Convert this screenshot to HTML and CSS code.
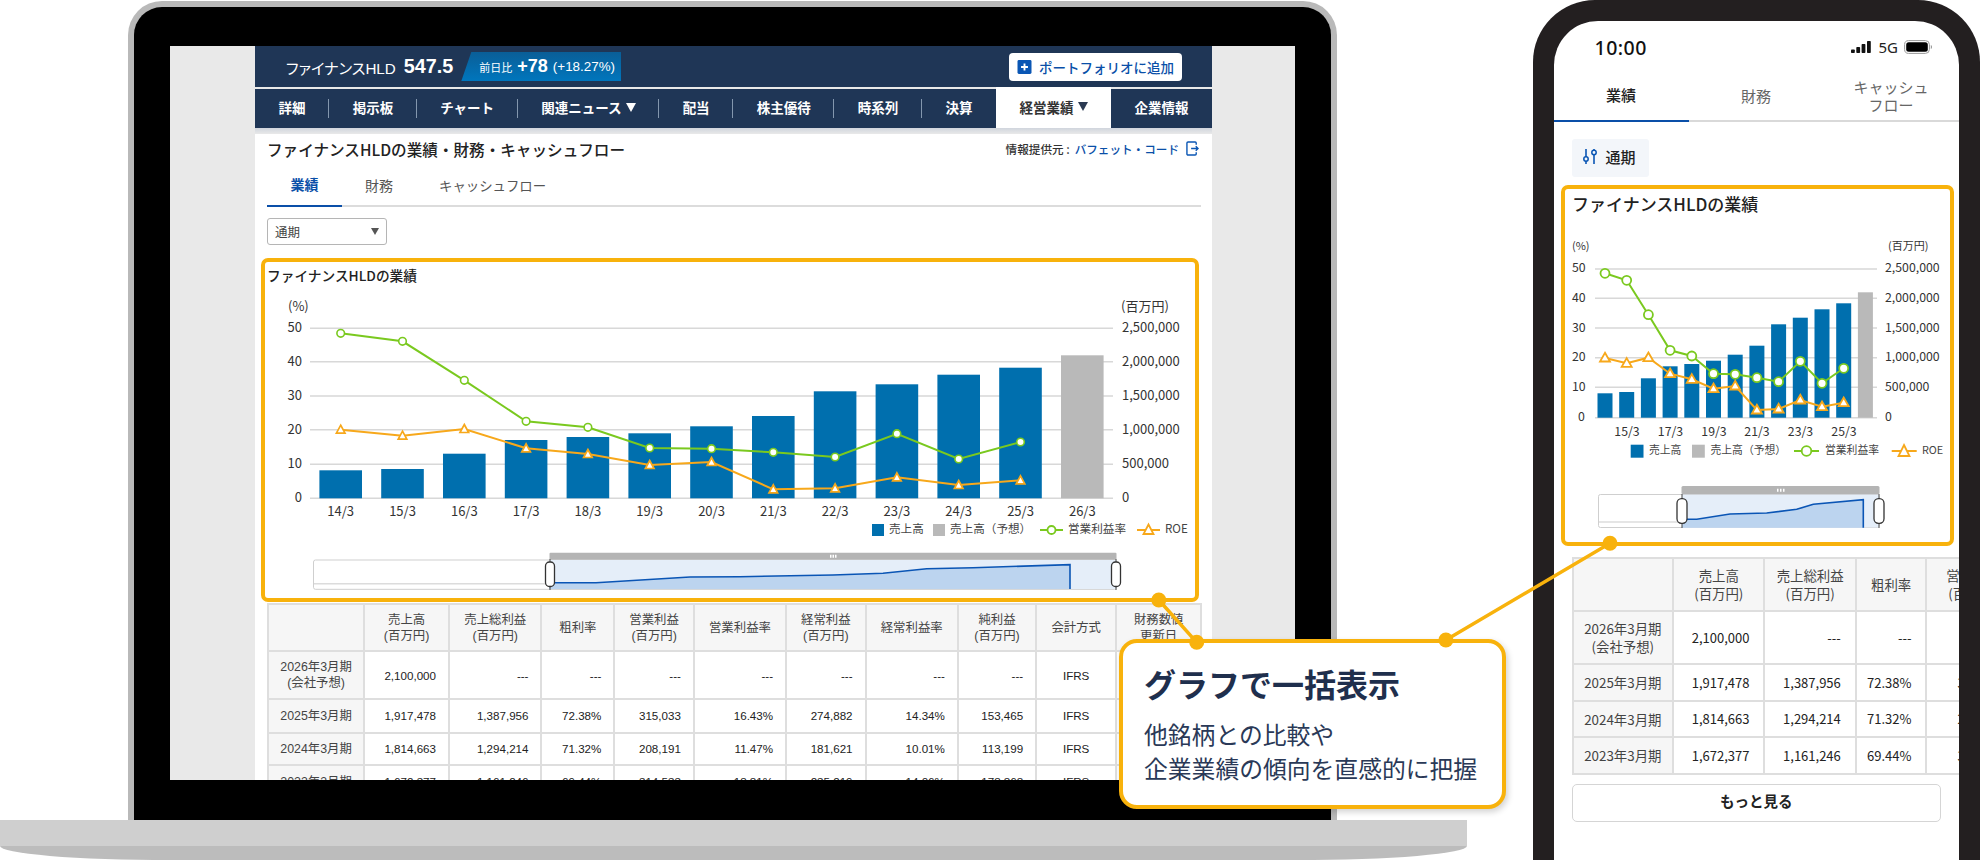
FILE: index.html
```html
<!DOCTYPE html>
<html lang="ja">
<head>
<meta charset="utf-8">
<title>ファイナンスHLDの業績</title>
<link rel="stylesheet" href="styles.css">
</head>
<body>
<div class="stage">

  <div class="laptop-base"></div>

  <div class="laptop">
    <div class="screen">
      <div class="app">
        <header class="stock">
          <span class="stock-name">ファイナンスHLD</span>
          <span class="stock-price">547.5</span>
          <span class="stock-badge"><span class="badge-label">前日比</span><b class="badge-diff">+78</b><span class="badge-pct">(+18.27%)</span></span>
          <button class="add-btn">
            <svg class="add-icon" viewBox="0 0 15 15"><rect width="15" height="15" rx="1.5" fill="#0a56b4"/><path d="M7.5 3.8v7.4M3.8 7.5h7.4" stroke="#fff" stroke-width="2"/></svg>
            ポートフォリオに追加
          </button>
        </header>
        <nav class="nav">
          <a class="nav-item sep">詳細</a>
          <a class="nav-item sep">掲示板</a>
          <a class="nav-item sep">チャート</a>
          <a class="nav-item sep">関連ニュース<i class="caret"></i></a>
          <a class="nav-item sep">配当</a>
          <a class="nav-item sep">株主優待</a>
          <a class="nav-item sep">時系列</a>
          <a class="nav-item">決算</a>
          <a class="nav-item active">経営業績<i class="caret"></i></a>
          <a class="nav-item">企業情報</a>
        </nav>
        <div class="band"></div>
        <main class="content">
          <div class="title-row">
            <h1 class="page-title">ファイナンスHLDの業績・財務・キャッシュフロー</h1>
            <div class="provider"><span>情報提供元 :</span><a class="provider-link">バフェット・コード</a>
              <svg class="ext-icon" viewBox="0 0 14 16"><path d="M11 4V2.2A1.2 1.2 0 0 0 9.800 1H2.200A1.200 1.200 0 0 0 1 2.200v11.600A1.200 1.200 0 0 0 2.200 15h7.600A1.200 1.200 0 0 0 11 13.800V12M5.500 8H13M10.500 5.500 13 8l-2.500 2.500" fill="none" stroke="#0a56b4" stroke-width="1.500"/></svg>
            </div>
          </div>
          <div class="tabs">
            <a class="tab tab-on">業績</a>
            <a class="tab">財務</a>
            <a class="tab tab-long">キャッシュフロー</a>
          </div>
          <div class="select"><span>通期</span><i class="select-caret"></i></div>

          <section class="hl hl-desk">
            <h2 class="hl-title">ファイナンスHLDの業績</h2>
            <svg class="chart chart-desk" viewBox="265 292 930 305">
              <defs>
                <marker id="dc" markerUnits="userSpaceOnUse" markerWidth="12" markerHeight="12" refX="6" refY="6"><circle cx="6" cy="6" r="3.800" fill="#fff" stroke="#7ac91f" stroke-width="1.600"/></marker>
                <marker id="dt" markerUnits="userSpaceOnUse" markerWidth="14" markerHeight="14" refX="7" refY="7"><path d="M7 2.500 11.300 10.500H2.700Z" fill="#fff" stroke="#f7a81b" stroke-width="1.700"/></marker>
              </defs>
              <g class="grid">
                <path d="M310 327.300H1113M310 360.700H1113M310 395H1113M310 428.700H1113M310 463.300H1113M310 497.300H1113"/>
              </g>
              <g class="bars">
                <rect x="319.400" y="469.300" width="42.600" height="28"/>
                <rect x="381.200" y="468" width="42.600" height="29.300"/>
                <rect x="443" y="452.700" width="42.600" height="44.600"/>
                <rect x="504.800" y="439" width="42.600" height="58.300"/>
                <rect x="566.600" y="436" width="42.600" height="61.300"/>
                <rect x="628.400" y="432.300" width="42.600" height="65"/>
                <rect x="690.200" y="425.300" width="42.600" height="72"/>
                <rect x="752" y="415" width="42.600" height="82.300"/>
                <rect x="813.800" y="390.300" width="42.600" height="107"/>
                <rect x="875.600" y="383.300" width="42.600" height="114"/>
                <rect x="937.400" y="373.700" width="42.600" height="123.600"/>
                <rect x="999.200" y="366.700" width="42.600" height="130.600"/>
                <rect class="bar-est" x="1061" y="354.300" width="42.600" height="143"/>
              </g>
              <polyline class="line-green" marker-start="url(#dc)" marker-mid="url(#dc)" marker-end="url(#dc)" points="340.700,332.300 402.500,340.300 464.300,379.300 526.100,420.300 587.900,426.300 649.700,447 711.500,447.700 773.300,451.300 835.100,456 896.900,432.700 958.700,458 1020.500,441"/>
              <polyline class="line-orange" marker-start="url(#dt)" marker-mid="url(#dt)" marker-end="url(#dt)" points="340.700,428.700 402.500,434.700 464.300,428 526.100,447.300 587.900,453 649.700,464 711.500,461 773.300,488.300 835.100,487.300 896.900,476.300 958.700,484 1020.500,479.300"/>
              <g class="ax">
                <text x="288" y="311">(%)</text>
                <text x="1121" y="311">(百万円)</text>
                <g class="end">
                  <text x="302" y="331.500">50</text><text x="302" y="365.500">40</text><text x="302" y="399.500">30</text><text x="302" y="433.500">20</text><text x="302" y="467.500">10</text><text x="302" y="501.500">0</text>
                </g>
                <text x="1122" y="331.500">2,500,000</text><text x="1122" y="365.500">2,000,000</text><text x="1122" y="399.500">1,500,000</text><text x="1122" y="433.500">1,000,000</text><text x="1122" y="467.500">500,000</text><text x="1122" y="501.500">0</text>
                <g class="mid">
                  <text x="340.700" y="515.500">14/3</text><text x="402.500" y="515.500">15/3</text><text x="464.300" y="515.500">16/3</text><text x="526.100" y="515.500">17/3</text><text x="587.900" y="515.500">18/3</text><text x="649.700" y="515.500">19/3</text><text x="711.500" y="515.500">20/3</text><text x="773.300" y="515.500">21/3</text><text x="835.100" y="515.500">22/3</text><text x="896.900" y="515.500">23/3</text><text x="958.700" y="515.500">24/3</text><text x="1020.500" y="515.500">25/3</text><text x="1082.300" y="515.500">26/3</text>
                </g>
              </g>
              <g class="legend">
                <rect class="bars-swatch" x="872" y="523" width="12" height="12"/><text x="889" y="533">売上高</text>
                <rect class="bar-est" x="933" y="523" width="12" height="12"/><text x="950" y="533">売上高（予想）</text>
                <path class="line-green" d="M1040 529H1063"/><circle class="mark-c" cx="1051.500" cy="529" r="4"/><text x="1068" y="533">営業利益率</text>
                <path class="line-orange" d="M1137 529H1160"/><path class="mark-t" d="M1148.500 523.500 1153.500 533H1143.500Z"/><text x="1165" y="533">ROE</text>
              </g>
              <g class="mini">
                <rect class="mini-track" x="313.500" y="559" width="803" height="29.300" rx="2"/>
                <path class="mini-base" d="M314 582.700H549"/>
                <rect class="mini-sel" x="549.500" y="559" width="567" height="29"/>
                <path class="mini-area" d="M549 588V581.700L596 581.700 690 576 740 575.700 833 574 883 572.300 926.700 567.700 973 566.700 1070 563.700V588Z"/>
                <path class="mini-line" d="M549 581.700 596 581.700 690 576 740 575.700 833 574 883 572.300 926.700 567.700 973 566.700 1070 563.700V588"/>
                <rect class="mini-bar" x="549.500" y="551.700" width="567" height="7" rx="1"/>
                <path class="mini-grip" d="M830 555.200h1.500M832.500 555.200h1.500M835 555.200h1.500"/>
                <path class="mini-stem" d="M550 558V589M1116 558V589"/>
                <rect class="mini-handle" x="545.500" y="561" width="9" height="24.500" rx="4"/>
                <rect class="mini-handle" x="1111.500" y="561" width="9" height="24.500" rx="4"/>
              </g>
            </svg>
          </section>

          <table class="fin fin-desk">
            <colgroup><col class="d1"><col class="d2"><col class="d3"><col class="d4"><col class="d5"><col class="d6"><col class="d7"><col class="d8"><col class="d9"><col class="d10"><col class="d11"></colgroup>
            <tr class="r-head"><th></th><th>売上高<br>(百万円)</th><th>売上総利益<br>(百万円)</th><th>粗利率</th><th>営業利益<br>(百万円)</th><th>営業利益率</th><th>経常利益<br>(百万円)</th><th>経常利益率</th><th>純利益<br>(百万円)</th><th>会計方式</th><th>財務数値<br>更新日</th></tr>
            <tr class="r-first"><th>2026年3月期<br>(会社予想)</th><td>2,100,000</td><td>---</td><td>---</td><td>---</td><td>---</td><td>---</td><td>---</td><td>---</td><td class="ctr">IFRS</td><td></td></tr>
            <tr class="r-2"><th>2025年3月期</th><td>1,917,478</td><td>1,387,956</td><td>72.38%</td><td>315,033</td><td>16.43%</td><td>274,882</td><td>14.34%</td><td>153,465</td><td class="ctr">IFRS</td><td></td></tr>
            <tr class="r-3"><th>2024年3月期</th><td>1,814,663</td><td>1,294,214</td><td>71.32%</td><td>208,191</td><td>11.47%</td><td>181,621</td><td>10.01%</td><td>113,199</td><td class="ctr">IFRS</td><td></td></tr>
            <tr class="r-3"><th>2023年3月期</th><td>1,672,377</td><td>1,161,246</td><td>69.44%</td><td>314,533</td><td>18.81%</td><td>235,219</td><td>14.06%</td><td>178,868</td><td class="ctr">IFRS</td><td></td></tr>
          </table>
        </main>
      </div>
    </div>
  </div>

  <div class="phone">
    <div class="phone-screen">
      <div class="status">
        <span class="time">10:00</span>
        <span class="status-right">
          <svg class="signal" viewBox="0 0 20 12"><rect x="0" y="8.500" width="3.800" height="3.500" rx=".8"/><rect x="5.300" y="6" width="3.800" height="6" rx=".8"/><rect x="10.600" y="3" width="3.800" height="9" rx=".8"/><rect x="16" y="0" width="3.800" height="12" rx=".8"/></svg>
          <span class="net">5G</span>
          <svg class="battery" viewBox="0 0 28 14"><rect x=".6" y=".6" width="24.800" height="12.800" rx="4" fill="none" stroke="#999" stroke-width="1"/><rect x="2.200" y="2.200" width="21.600" height="9.600" rx="2.500" fill="#000"/><path d="M26.800 5v4c.8-.3 1.200-1.100 1.200-2s-.4-1.700-1.200-2Z" fill="#999"/></svg>
        </span>
      </div>
      <div class="p-tabs">
        <a class="p-tab p-tab-on">業績</a>
        <a class="p-tab">財務</a>
        <a class="p-tab">キャッシュ<br>フロー</a>
      </div>
      <div class="chip">
        <svg class="chip-icon" viewBox="0 0 14 15"><path d="M3 0v8M3 12v3M11 0v1M11 6v9" fill="none" stroke="#0a56b4" stroke-width="1.600"/><circle cx="3" cy="10" r="2.200" fill="none" stroke="#0a56b4" stroke-width="1.500"/><circle cx="11" cy="3.500" r="2.200" fill="none" stroke="#0a56b4" stroke-width="1.500"/></svg>
        通期
      </div>

      <section class="hl hl-phone">
        <h2 class="hl-title-p">ファイナンスHLDの業績</h2>
        <svg class="chart chart-phone" viewBox="1565 220 385 321">
          <defs>
            <marker id="pc" markerUnits="userSpaceOnUse" markerWidth="14" markerHeight="14" refX="7" refY="7"><circle cx="7" cy="7" r="4.500" fill="#fff" stroke="#7ac91f" stroke-width="1.800"/></marker>
            <marker id="pt" markerUnits="userSpaceOnUse" markerWidth="16" markerHeight="16" refX="8" refY="8"><path d="M8 2.800 13 11.500H3Z" fill="#fff" stroke="#f7a81b" stroke-width="1.800"/></marker>
          </defs>
          <g class="grid">
            <path d="M1595 268H1877M1595 297.300H1877M1595 327H1877M1595 356.700H1877M1595 386.300H1877M1595 416.700H1877"/>
          </g>
          <g class="bars">
            <rect x="1597.500" y="392.300" width="15" height="24.400"/>
            <rect x="1619.200" y="391" width="15" height="25.700"/>
            <rect x="1640.900" y="377.300" width="15" height="39.400"/>
            <rect x="1662.600" y="365.300" width="15" height="51.400"/>
            <rect x="1684.300" y="363" width="15" height="53.700"/>
            <rect x="1706" y="359.700" width="15" height="57"/>
            <rect x="1727.700" y="353.700" width="15" height="63"/>
            <rect x="1749.400" y="344.700" width="15" height="72"/>
            <rect x="1771.100" y="323.300" width="15" height="93.400"/>
            <rect x="1792.800" y="316.700" width="15" height="100"/>
            <rect x="1814.500" y="308.300" width="15" height="108.400"/>
            <rect x="1836.200" y="302.300" width="15" height="114.400"/>
            <rect class="bar-est" x="1857.900" y="291.300" width="15" height="125.400"/>
          </g>
          <polyline class="line-green" marker-start="url(#pc)" marker-mid="url(#pc)" marker-end="url(#pc)" points="1605,272.300 1626.700,279.300 1648.400,313.700 1670.100,349.300 1691.800,355 1713.500,372.700 1735.200,373.300 1756.900,376.700 1778.600,380.700 1800.300,360.300 1822,382.300 1843.700,367.300"/>
          <polyline class="line-orange" marker-start="url(#pt)" marker-mid="url(#pt)" marker-end="url(#pt)" points="1605,357 1626.700,362.300 1648.400,356.700 1670.100,372.700 1691.800,378.300 1713.500,387.700 1735.200,385 1756.900,409 1778.600,408 1800.300,399 1822,405.700 1843.700,401.700"/>
          <g class="ax ax-p">
            <text class="unit" x="1572" y="250">(%)</text>
            <text class="unit" x="1888" y="250">(百万円)</text>
            <text x="1572" y="272.300">50</text><text x="1572" y="301.800">40</text><text x="1572" y="331.500">30</text><text x="1572" y="361">20</text><text x="1572" y="390.800">10</text><text x="1578" y="421">0</text>
            <text x="1885" y="272.300">2,500,000</text><text x="1885" y="301.800">2,000,000</text><text x="1885" y="331.500">1,500,000</text><text x="1885" y="361">1,000,000</text><text x="1885" y="390.800">500,000</text><text x="1885" y="421">0</text>
            <g class="mid">
              <text x="1627" y="435.500">15/3</text><text x="1670.500" y="435.500">17/3</text><text x="1714" y="435.500">19/3</text><text x="1757" y="435.500">21/3</text><text x="1800.500" y="435.500">23/3</text><text x="1844" y="435.500">25/3</text>
            </g>
          </g>
          <g class="legend legend-p">
            <rect class="bars-swatch" x="1630.700" y="443.700" width="12.800" height="13"/><text x="1649" y="454">売上高</text>
            <rect class="bar-est" x="1692" y="443.700" width="12.800" height="13"/><text x="1710.500" y="454">売上高（予想）</text>
            <path class="line-green" d="M1794 450H1819"/><circle class="mark-c" cx="1806.500" cy="450" r="4.800"/><text x="1825" y="454">営業利益率</text>
            <path class="line-orange" d="M1891.700 450H1916.700"/><path class="mark-t" d="M1904 444 1909.500 455H1898.500Z"/><text x="1922" y="454">ROE</text>
          </g>
          <g class="mini">
            <rect class="mini-track" x="1598.500" y="493.500" width="280.500" height="33" rx="2"/>
            <path class="mini-base" d="M1599 521H1682"/>
            <rect class="mini-sel" x="1682" y="493.500" width="197" height="33"/>
            <path class="mini-area" d="M1682 526.700V518.300L1696.700 518.300 1730 513 1766.700 512 1796.700 508.300 1813.300 503.300 1863.300 498.700V526.700Z"/>
            <path class="mini-line" d="M1682 518.300 1696.700 518.300 1730 513 1766.700 512 1796.700 508.300 1813.300 503.300 1863.300 498.700V526.700"/>
            <rect class="mini-bar" x="1681.500" y="485" width="198" height="8.300" rx="1.500"/>
            <path class="mini-grip" d="M1777 489.200h1.500M1780 489.200h1.500M1783 489.200h1.500"/>
            <path class="mini-stem" d="M1682 493V527M1879 493V527"/>
            <rect class="mini-handle" x="1677" y="497.700" width="10" height="24.600" rx="4.500"/>
            <rect class="mini-handle" x="1874" y="497.700" width="10" height="24.600" rx="4.500"/>
          </g>
        </svg>
      </section>

      <div class="p-table-wrap">
        <table class="fin fin-phone">
          <colgroup><col class="p1"><col class="p2"><col class="p3"><col class="p4"><col class="p5"></colgroup>
          <tr class="pr-head"><th></th><th>売上高<br>(百万円)</th><th>売上総利益<br>(百万円)</th><th>粗利率</th><th>営業利益<br>(百万円)</th></tr>
          <tr class="pr-first"><th>2026年3月期<br>(会社予想)</th><td>2,100,000</td><td>---</td><td>---</td><td>---</td></tr>
          <tr class="pr-row"><th>2025年3月期</th><td>1,917,478</td><td>1,387,956</td><td>72.38%</td><td>315,033</td></tr>
          <tr class="pr-row"><th>2024年3月期</th><td>1,814,663</td><td>1,294,214</td><td>71.32%</td><td>208,191</td></tr>
          <tr class="pr-row"><th>2023年3月期</th><td>1,672,377</td><td>1,161,246</td><td>69.44%</td><td>314,533</td></tr>
        </table>
      </div>
      <button class="more">もっと見る</button>
    </div>
  </div>

  <aside class="callout">
    <h3 class="callout-title">グラフで一括表示</h3>
    <p class="callout-text">他銘柄との比較や<br>企業業績の傾向を直感的に把握</p>
  </aside>

  <svg class="connectors" viewBox="0 0 1980 860">
    <path d="M1158.800 600 1196.700 642.300M1445.900 640 1610 543.300" fill="none" stroke="#f8b20c" stroke-width="3.500"/>
    <circle cx="1158.800" cy="600" r="7.500" fill="#f8b20c"/>
    <circle cx="1196.700" cy="642.300" r="7.500" fill="#f8b20c"/>
    <circle cx="1445.900" cy="640" r="7.500" fill="#f8b20c"/>
    <circle cx="1610" cy="543.300" r="7.500" fill="#f8b20c"/>
  </svg>
</div>
</body>
</html>
```

FILE: styles.css
```css
* { box-sizing: border-box; }
html, body { margin: 0; padding: 0; background: #fff; }
body { font-family: "Noto Sans CJK JP", "Noto Sans", sans-serif; color: #222; }
h1, h2, h3, p { margin: 0; }
a { color: inherit; text-decoration: none; }
button { font-family: inherit; }

.stage { position: relative; width: 1980px; height: 860px; overflow: hidden; background: #fff; }

/* laptop */
.laptop-base {
  position: absolute; left: 0; top: 820px; width: 1467px; height: 40px;
  background: linear-gradient(#cfcfcf 26px, #bcbcbc 26px);
  border-radius: 0 0 170px 170px / 0 0 14px 14px;
}
.laptop {
  position: absolute; left: 128px; top: 1px; width: 1209px; height: 819px;
  background: #000;
  border: 6px solid #b9b9b9; border-bottom: 0;
  border-radius: 34px 34px 0 0;
  padding: 39px 36px 39px;
}
.screen { height: 734px; background: #e9e9e9; overflow: hidden; padding: 0 84px 0 85px; }
.app { width: 957px; font-family: "Liberation Sans", "Noto Sans CJK JP", sans-serif; }

/* stock header */
.stock { height: 41px; background: #1f3656; display: flex; align-items: center; padding: 0 30px 0 31px; color: #fff; }
.stock-name { font-size: 15.200px; font-feature-settings: "palt"; }
.stock-price { font-size: 19.800px; font-weight: 700; margin-left: 8px; }
.stock-badge {
  display: flex; align-items: center; height: 29px; width: 160px; margin-left: 8px; padding-left: 18px;
  background: linear-gradient(#0a5e97, #0076bd);
  clip-path: polygon(10px 0, 100% 0, 100% 100%, 0 100%);
}
.badge-label { font-size: 11px; }
.badge-diff { font-size: 18px; margin-left: 5px; }
.badge-pct { font-size: 13.400px; margin-left: 5px; }
.add-btn {
  margin-left: auto; display: flex; align-items: center; gap: 7px; width: 173px; height: 28px; padding: 0 0 0 8px;
  background: #fff; border: 0; border-radius: 4px; color: #0a4fa8; font-size: 13.500px; font-weight: 500;
  font-family: "Noto Sans CJK JP", sans-serif; white-space: nowrap;
}
.add-icon { width: 15px; height: 14px; flex: none; }

/* nav */
.nav { display: flex; height: 39.500px; margin-top: 1.500px; background: #1f3656; }
.nav-item {
  display: flex; align-items: center; padding: 0 23.550px 2px; color: #fff; font-size: 13.500px; font-weight: 700;
  font-family: "Noto Sans CJK JP", sans-serif; white-space: nowrap;
  background: linear-gradient(#8397ae, #8397ae) right center / 1px 19px no-repeat;
}
.nav-item:not(.sep) { background: none; }
.nav-item.active { background: #fff; color: #333; margin-top: -1.500px; }
.caret { width: 0; height: 0; margin-left: 4px; border-left: 5px solid transparent; border-right: 5px solid transparent; border-top: 9px solid #fff; }
.active .caret { border-top-color: #2b3a52; }
.band { height: 6px; background: linear-gradient(#d0d5dd, #e9e9e9); }

/* content */
.content { background: #fff; padding: 0 11px 0 12px; font-family: "Noto Sans CJK JP", sans-serif; }
.title-row { display: flex; justify-content: space-between; align-items: center; height: 34px; padding: 0 2px 5px 0; }
.page-title { font-size: 15.600px; font-weight: 500; color: #222; white-space: nowrap; }
.provider { display: flex; align-items: center; font-size: 11.600px; font-weight: 500; color: #333; white-space: nowrap; }
.provider-link { color: #0a4fa8; font-size: 11.600px; margin-left: 5px; }
.ext-icon { width: 13px; height: 15px; margin-left: 7px; }

.tabs { display: flex; height: 39px; border-bottom: 2px solid #dcdcdc; font-size: 14px; color: #555; }
.tab { display: flex; align-items: center; padding: 0 23px 5px; height: 39px; }
.tab-long { font-size: 13.400px; white-space: nowrap; }
.tab-on { color: #0a4fa8; font-weight: 700; padding: 0 23.500px 5px; border-bottom: 2px solid #0a4fa8; }

.select {
  display: flex; align-items: center; justify-content: space-between; width: 120px; height: 27px; margin-top: 11px; padding: 0 7px 0 7px;
  border: 1.500px solid #b5b5b5; border-radius: 3px; font-size: 12.500px; color: #444;
}
.select-caret { width: 0; height: 0; border-left: 4.500px solid transparent; border-right: 4.500px solid transparent; border-top: 7px solid #555; }

/* highlight box */
.hl { border: 4px solid #f8b20c; border-radius: 7px; background: #fff; }
.hl-desk { width: 938px; height: 344px; margin: 13px 0 0 -6px; }
.hl-title { height: 31px; line-height: 26px; padding-left: 2px; font-size: 13.700px; font-weight: 500; color: #222; white-space: nowrap; }
.chart { display: block; }
.chart-desk { width: 930px; height: 305px; }
.chart-phone { width: 385px; height: 321px; }

.grid path { fill: none; stroke: #d8d8d8; stroke-width: 1.500; }
.bars rect, .bars-swatch { fill: #006fae; }
.bars .bar-est, .bar-est { fill: #b9b9b9; }
.line-green { fill: none; stroke: #7ac91f; stroke-width: 2; }
.line-orange { fill: none; stroke: #f7a81b; stroke-width: 2; }
.mark-c { fill: #fff; stroke: #7ac91f; stroke-width: 1.800; }
.mark-t { fill: #fff; stroke: #f7a81b; stroke-width: 1.800; }
.ax text { font-size: 13px; fill: #333; transform: translateY(-1px); }
.ax .end text { text-anchor: end; }
.ax .mid text { text-anchor: middle; }
.ax-p text { font-size: 12.300px; }
.ax-p .unit { font-size: 11px; }
.legend text { font-size: 11.600px; fill: #444; transform: translateY(-1px); }
.legend-p text { font-size: 10.800px; }
.mini-track { fill: #fff; stroke: #cfcfcf; stroke-width: 1; }
.mini-base { fill: none; stroke: #dcdcdc; stroke-width: 1.500; }
.mini-sel { fill: #e5eef9; }
.mini-area { fill: #bcd4ef; }
.mini-line { fill: none; stroke: #0a55b5; stroke-width: 1.600; }
.mini-bar { fill: #b4b4b4; }
.mini-grip { fill: none; stroke: #fff; stroke-width: 3; }
.mini-stem { fill: none; stroke: #444; stroke-width: 1; }
.mini-handle { fill: #fff; stroke: #333; stroke-width: 1.300; }

/* tables */
.fin { border-collapse: collapse; table-layout: fixed; }
.fin th, .fin td { border: 2px solid #dedede; padding: 0; }
.fin th { background: #f6f6f6; font-weight: 400; text-align: center; color: #444; }
.fin td { text-align: right; color: #222; }
.fin-desk { width: 933px; margin-top: 1px; font-family: "Liberation Sans", "Noto Sans CJK JP", sans-serif; }
.fin-desk th { font-size: 12.400px; line-height: 16px; }
.fin-desk td { font-size: 11.600px; padding-right: 12px; }
.fin-desk .ctr { text-align: center; padding-right: 0; }
.r-head { height: 47px; }
.r-first { height: 48px; }
.r-2 { height: 33.500px; }
.r-3 { height: 32.800px; }
.d1 { width: 96.200px; } .d2 { width: 84.800px; } .d3 { width: 92.500px; } .d4 { width: 72.900px; }
.d5 { width: 79.500px; } .d6 { width: 92.200px; } .d7 { width: 79.500px; } .d8 { width: 92.300px; }
.d9 { width: 78.300px; } .d10 { width: 80px; } .d11 { width: 85px; }

/* phone */
.phone {
  position: absolute; left: 1533px; top: 0; width: 447px; height: 900px;
  background: #231f20; border-radius: 62px 62px 0 0; padding: 20.500px 21px 0 20.500px;
}
.phone-screen { height: 880px; background: #fff; border-radius: 44px 44px 0 0; overflow: hidden; }
.status { display: flex; justify-content: space-between; align-items: center; height: 53px; padding: 0 27px 0 41px; }
.time { font-size: 19.500px; font-weight: 500; font-family: "Noto Sans", sans-serif; color: #111; letter-spacing: .5px; }
.status-right { display: flex; align-items: center; }
.signal { width: 20px; height: 12px; fill: #111; }
.net { font-size: 15px; font-family: "Noto Sans", sans-serif; margin: 0 6px 0 7px; color: #222; }
.battery { width: 28px; height: 14px; }
.p-tabs { display: grid; grid-template-columns: 135px 135px 135px; height: 48px; border-bottom: 2px solid #d9d9d9; }
.p-tab { display: flex; align-items: center; justify-content: center; height: 48px; padding-bottom: 4px; text-align: center; font-size: 15px; line-height: 18px; color: #666; }
.p-tab-on { color: #222; font-weight: 500; border-bottom: 2px solid #0a4fa8; }
.chip {
  display: flex; align-items: center; gap: 9px; width: 77px; height: 38px; margin: 17px 0 0 18px; padding: 0 0 2px 11px;
  background: #f3f6fa; border-radius: 3px; font-size: 15px; font-weight: 500; color: #222;
}
.chip-icon { width: 14px; height: 15px; flex: none; }
.hl-phone { width: 393px; height: 361px; margin: 8px 0 0 7.500px; }
.hl-title-p { height: 32px; line-height: 30px; padding-left: 7px; font-size: 17px; font-weight: 500; color: #222; white-space: nowrap; }
.p-table-wrap { width: 387px; margin: 11px 0 0 18px; overflow: hidden; }
.fin-phone { width: 447px; }
.fin-phone th { font-size: 13.400px; line-height: 18px; }
.fin-phone td { font-size: 13px; padding-right: 14px; }
.pr-head { height: 53px; }
.pr-first { height: 53.500px; }
.pr-row { height: 36.500px; }
.p1 { width: 100.600px; } .p2 { width: 91.400px; } .p3 { width: 91.300px; } .p4 { width: 70.700px; } .p5 { width: 93px; }
.more {
  display: block; width: 369.500px; height: 38.500px; margin: 9px 0 0 18px; padding: 0 0 5px; background: #fff;
  border: 1.500px solid #d5d5d5; border-radius: 5px; font-size: 14.500px; font-weight: 700; color: #222;
}

/* callout */
.callout {
  position: absolute; left: 1119px; top: 639px; width: 387px; height: 170px; padding: 18px 0 0 21px;
  background: #fff; border: 4px solid #f8b20c; border-radius: 18px; box-shadow: 2px 3px 6px rgba(0,0,0,.18);
  color: #1f2f4d;
}
.callout-title { font-size: 32px; line-height: 44px; font-weight: 700; white-space: nowrap; }
.callout-text { margin-top: 12px; font-size: 23.800px; line-height: 34px; font-weight: 400; white-space: nowrap; color: #2a3957; }
.connectors { position: absolute; left: 0; top: 0; width: 1980px; height: 860px; pointer-events: none; }
```
